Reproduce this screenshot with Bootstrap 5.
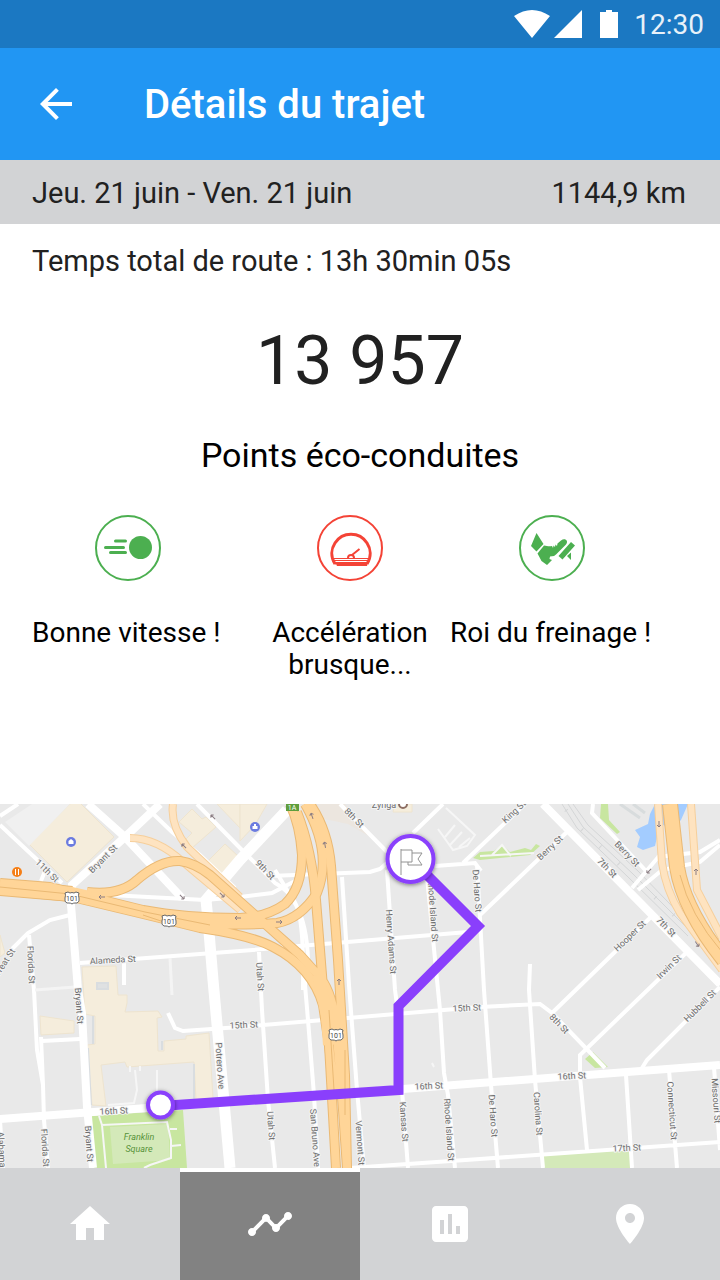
<!DOCTYPE html>
<html lang="fr">
<head>
<meta charset="utf-8">
<meta name="viewport" content="width=device-width, initial-scale=1">
<title>Détails du trajet</title>
<link href="https://cdn.jsdelivr.net/npm/bootstrap@5.3.0/dist/css/bootstrap.min.css" rel="stylesheet">
<style>
body{font-family:Roboto,"Noto Sans",sans-serif;font-size:28px;line-height:32px;color:#000}
.status-bar{background:#1b78c2;height:48px;color:#e8f1f9}
.status-icons{margin-right:14px}
.status-time{padding-top:2px}
.app-bar{background:#2196f3;height:112px;padding:0 32px}
.app-title{font-size:40px;line-height:48px;font-weight:500;padding-top:2px}
.back-btn{width:48px;height:48px;margin-right:64px}
.trip-strip{background:#d2d3d5;color:#212121;font-size:29px;padding:17px 34px 15px 32px}
.duration{color:#212121;font-size:29px;padding:21px 32px 0}
.score{color:#212121;font-size:68px;line-height:80px;margin-top:44px}
.score-label{font-size:34px;line-height:40px;margin-top:34px}
.feats{padding:0 32px;margin-top:40px;min-height:289px}
.feat-side{flex:0 1 192px}
.feat-mid{flex:0 1 200px;margin-left:26px}
.feat-end{flex:0 1 204px}
.feat-label{margin-top:36px}
.map-box{min-height:364px;background:#e9e9e9}
.tab-link{height:112px;background:#d2d3d5;color:#fff;border-top:4px solid #d2d3d5;padding-bottom:4px}
.tab-link.active{background:#828282;border-top-color:#fff}
.minor{stroke:#fff;stroke-width:4}
.thin{stroke:#f6f6f6;stroke-width:2}
.major{stroke:#fff;stroke-width:8}
.hw-edge{stroke:#eab974}
.hw{stroke:#ffd598}
.ramp-edge{stroke:#f6cf9b}
.ramp{stroke:#fee3c0}
.names{font-size:9px;fill:#6e6e6e;stroke:#f4f4f4;stroke-width:2;paint-order:stroke;text-anchor:middle;stroke-linejoin:round}
</style>
</head>
<body class="d-flex flex-column min-vh-100 bg-white">

<div class="status-bar d-flex align-items-center justify-content-end px-3">
  <svg width="106" height="28" viewBox="0 0 106 28" fill="#fff" class="status-icons" aria-hidden="true"><path d="M0 6Q18-6 36 6L18 28ZM40 28 68 0V28ZM86 2H92V0H98V2H104V28H86Z"/></svg>
  <span class="status-time">12:30</span>
</div>

<header class="app-bar d-flex align-items-center text-white">
  <button type="button" class="back-btn btn border-0 p-0 text-white d-flex align-items-center justify-content-center" aria-label="Retour">
    <svg width="48" height="48" viewBox="0 0 24 24" fill="currentColor"><path d="M20 11H7.830L13.420 5.410 12 4 4 12 12 20 13.410 18.590 7.830 13H20Z"/></svg>
  </button>
  <h1 class="app-title mb-0">Détails du trajet</h1>
</header>

<main class="d-flex flex-column flex-grow-1">
  <div class="trip-strip d-flex justify-content-between">
    <span>Jeu. 21 juin - Ven. 21 juin</span><span>1144,9 km</span>
  </div>
  <div class="duration">Temps total de route : 13h 30min 05s</div>
  <div class="score text-center">13 957</div>
  <div class="score-label text-center">Points éco-conduites</div>

  <div class="feats d-flex text-center">
    <div class="feat-side">
      <svg width="66" height="66" viewBox="0 0 66 66" fill="#4caf50" stroke="#4caf50" aria-hidden="true"><circle cx="33" cy="33" r="32" fill="#fff" stroke-width="2"/><circle cx="45.500" cy="32.500" r="11.500" stroke="none"/><path d="M20.500 26H30.500M10.500 32.500H28.500M15.500 37.500H30.500" stroke-width="3" stroke-linecap="round"/></svg>
      <div class="feat-label text-start text-nowrap">Bonne vitesse !</div>
    </div>
    <div class="feat-mid">
      <svg width="66" height="66" viewBox="0 0 66 66" fill="none" stroke="#f44336" aria-hidden="true"><circle cx="33" cy="33" r="32" fill="#fff" stroke-width="2"/><path d="M18 49C13.500 42 14 34 18 28A19 19 0 0 1 50 28C54 34 54.500 42 50 49" stroke-width="3"/><path d="M15 43.500H53M17 45.500H51" stroke-width="1"/><path d="M17 47H51L50 51H20L19 49 18 50Z" fill="#f44336" stroke="none"/><path d="M31 43A3 3 0 0 1 37 43M35 40 42.500 34" stroke-width="2"/></svg>
      <div class="feat-label">Accélération brusque...</div>
    </div>
    <div class="feat-end">
      <svg width="66" height="66" viewBox="0 0 66 66" fill="#4caf50" aria-hidden="true"><circle cx="33" cy="33" r="32" fill="#fff" stroke="#4caf50" stroke-width="2"/><path d="M17.500 18 24.500 29 17.500 36.500 12 31ZM25 30.500C28 31 30 31.500 33 31L34 33 34.500 30.500 36 32 36.500 29.500 38 31 38.500 28.500L42 25.500C46 22.500 50 26 47 29.500L37 39.500 35 41 31 41.500 30.500 44 33 45 28 50 22.500 46 18.500 38.500ZM52 27 56 30.500 43.500 44.500 39.500 41ZM48 41 52 37.500V45Z"/></svg>
      <div class="feat-label text-start text-nowrap">Roi du freinage !</div>
    </div>
  </div>

  <div class="map-box flex-grow-1 position-relative overflow-hidden">
  <svg class="position-absolute w-100 h-100 top-0 start-0" viewBox="0 804 720 364" preserveAspectRatio="xMidYMid slice" fill="none" role="img" aria-label="Carte du trajet">
    <defs>
      <filter id="shade" x="-30%" y="-30%" width="160%" height="160%"><feDropShadow dx="0" dy="1" stdDeviation="2" flood-opacity=".5"/></filter>
      <g id="shield"><path d="M-7-5-4-6-2-5Q0-6 2-5L4-6 7-5Q6-3 7 0 8 4 5 5H3Q1 5 0 6-1 5-3 5H-5Q-8 4-7 0-6-3-7-5Z" fill="#fff" stroke="#666"/><text y="3" font-size="7" fill="#444" text-anchor="middle">101</text></g>
      <path id="arrow" d="M-3 0H3M-3 0-1-2M-3 0-1 2" stroke="#8b7d83" stroke-width="1"/>
    </defs>

    <!-- buildings, parks, water -->
    <g fill="#f5eddc" stroke="#eee4cf">
      <path d="M77 800 114 837 67 882 29 844 70 804Z"/>
      <path d="M192 809 202 819 206 817 216 827 192 848 186 839 192 833 179 822ZM217 804 240 828V804ZM225 844 238 856 221 876 207 862Z"/>
      <path d="M240 804H267L255 825 240 841ZM395 804H412V812H393Z"/>
      <path d="M82 967 116 966 118 995 127 995V1003L125 1012 158 1011 162 1017 157 1018 158 1051H164V1041L186 1039V1036L209 1033 213 1098 196 1100 194 1062 127 1067 125 1062 101 1065 106 1106 92 1105 87 1045 95 1044V1016L85 1014Z"/>
      <path d="M40 1016 74 1021 74 1033 41 1035ZM0 935 5 953 0 957Z"/>
    </g>
    <path d="M97 983H108V989H97ZM93 1016V1044M88 1048 91 1105M162 1050V1041M194 1064V1099" fill="#dfe1e2" stroke="#d9dde0" stroke-width="2"/>
    <path d="M32 804 5 822 29 846 70 804Z" fill="#f0f0f0"/>
    <path d="M345 804H300L320 818 348 824 372 838Z" fill="#ece6df"/>
    <g fill="#c8e6a0">
      <path d="M89 1116 183 1110 187 1168H94ZM480 852 494 851 502 845 510 852 525 848 531 850 536 844 540 846 530 855 480 860 473 858ZM601 804 608 804 609 820 620 832 617 834 600 818ZM593 1052 608 1067 595 1068 585 1059Z"/>
      <path d="M543 1155 630 1150 632 1168H544Z" fill="#d4e9b9"/>
      <path d="M110 1127 168 1124 170 1160 113 1164Z" fill="#d4e9b9"/>
    </g>
    <path d="M655 804H688L681 820 672 828 660 824 655 846 643 850 637 847 640 837 635 830 648 824 650 814Z" fill="#a3ccff"/>
    <path d="M620 804 640 818M633 804 645 813" stroke="#d8dcdd" stroke-width="3"/>

    <!-- railway -->
    <g stroke="#d4d6d7"><path d="M562 804 577 828 627 876 688 936M568 804 583 827 633 874 693 934M573 804 588 825 638 871 697 932"/><path d="M566 810 580 828 692 932" stroke-width="4" stroke-dasharray="1 24"/></g>

    <!-- secondary streets -->
    <g class="thin"><path d="M99 1116 102 1125 167 1122 171 1140V1158L150 1165 144 1168M102 1125 106 1168M170 1129H177M171 1146 181 1145M108 1105 134 1103 137 1090 135 1070M157 1070V1095M130 1066V1072M140 1066V1071M438 829 453 850 467 846 475 835 446 808M445 837 455 825M450 845 462 832M459 847 470 838M480 856 534 853M492 855 502 845 511 856M432 1063 434 1067"/></g>
    <g class="minor">
      <path d="M0 825 62 883M0 816 18 804M45 871 41 881M143 804 172 832 200 855 235 888M197 804 240 848 275 883Q293 893 298 910 304 930 303 990M275 870 296 905Q307 925 308 960L305 985 308 1020 314 1095 318 1168"/>
      <path d="M110 895 205 900 240 897 272 893 297 880M270 876 370 872 380 869 387 863M435 866 475 863 481 871M340 804 388 853M443 804 413 833M525 804 463 863M568 831 480 915M342 877 349 985 357 1090 364 1168M387 870 395 990 397 1005M402 1090 408 1168M427 877 438 990 440 1010 444 1073 448 1095 455 1168M477 865 484 990 491 1085 498 1168M530 964 529 990 535 1080 543 1168"/>
      <path d="M70 915 50 920 28 933 12 949M29 935 34 990 37 1050 43 1085 44 1120 48 1168M41 1037 43 1085M42 1041 80 1039M80 963 240 951 480 931M259 952 262 1010 268 1100 275 1168M168 1013 175 1028 183 1031 240 1027 480 1007 540 1004 552 1013 605 1068M124 963V985M0 1120 3 1168"/>
      <path d="M652 916 552 1013M687 952 580 1055V1077L587 1150M720 987 647 1060 642 1068M626 1075 632 1168M669 1070 677 1168M714 1067 720 1150M350 1168 480 1159 720 1142M715 980 720 985"/>
      <path d="M593 804 592 813 647 872M660 855 632 888M657 857 700 852 720 840M638 890 662 870 700 862 720 845"/>
      <path d="M35 990 75 987M170 958 172 995" stroke="#f4f4f4" stroke-width="3"/>
    </g>
    <!-- main streets -->
    <g class="major">
      <path d="M160 804 125 837 72 885 71 905 78 990 82 1013 87 1107 93 1168M88 804 125 837 182 898M543 804 720 984"/>
      <path d="M0 1119 147 1108 403 1089 480 1083 720 1065"/>
      <path d="M287 810 240 860 206 900 208 920 213 980 218 1035 230 1168" stroke-width="11"/>
    </g>

    <!-- ramps -->
    <g class="ramp-edge" stroke-width="8"><path id="r1" d="M130 838Q157 838 183 862L240 910M173 804Q170 825 187 847L240 897M658 804 662 863Q666 890 680 913L722 970M691 804 697 890 722 938"/></g>
    <use href="#r1" class="ramp" stroke-width="6"/>

    <!-- freeways -->
    <g stroke-linejoin="round">
      <path class="hw-edge" stroke-width="16" d="M0 887 72 894"/>
      <g class="hw-edge" stroke-width="10">
        <path id="h1" d="M0 883 50 887 143 910Q185 918 240 918 267 917 285 904 302 888 302 855 300 825 290 804M0 891 72 897 143 914 200 928Q250 935 273 947 312 967 323 1005L329 1045 336 1168M165 917Q205 928 277 923 300 919 317 893 333 853 305 804"/>
        <path id="h2" d="M87 892Q120 896 137 880 160 860 180 861 195 863 210 875L300 955 318 975Q332 990 336 1025L343 1110 347 1168M297 812Q312 850 316 900L324 1000 334 1090M310 804Q328 830 331 866L338 960 345 1075 347 1168"/>
      </g>
      <use href="#h1" class="hw" stroke-width="8"/><use href="#h2" class="hw" stroke-width="8"/>
      <path class="hw" stroke-width="14" d="M0 887 72 894 90 898"/>
      <path class="hw" stroke-width="12" d="M318 975 327 1015 329 1045"/>
      <path class="hw-edge" stroke-width="16" d="M670 804 677 867Q684 910 724 960"/>
      <path class="hw" stroke-width="14" d="M670 804 677 867Q684 910 724 960"/>
      <path class="hw-edge" d="M0 887 70 894 145 912 210 925M680 875Q690 915 722 952M329 1010 334 1090M345 1050V1115M143 915 170 924" stroke-width="1"/>
    </g>
    <g><use href="#arrow" x="102" y="897"/><use href="#arrow" x="238" y="918"/><use href="#arrow" transform="translate(279 922) rotate(180)"/><use href="#arrow" transform="translate(312 816) rotate(70)"/><use href="#arrow" transform="translate(325 845) rotate(80)"/><use href="#arrow" transform="translate(339 982) rotate(90)"/><use href="#arrow" transform="translate(659 824) rotate(-90)"/><use href="#arrow" transform="translate(696 872) rotate(90)"/><use href="#arrow" transform="translate(697 944) rotate(-125)"/><use href="#arrow" transform="translate(182 897) rotate(-135)"/><use href="#arrow" transform="translate(222 895) rotate(-135)"/><use href="#arrow" transform="translate(184 846) rotate(45)"/><use href="#arrow" transform="translate(213 817) rotate(45)"/><use href="#arrow" transform="translate(649 871) rotate(-45)"/></g>

    <use href="#shield" x="72" y="898"/><use href="#shield" x="169" y="921"/><use href="#shield" x="336" y="1035"/>
    <path d="M286 804H299V811H286Z" fill="#5f9e3c"/><text x="292" y="810" font-size="7" fill="#fff" text-anchor="middle">1A</text>

    <!-- street names -->
    <g class="names">
      <text transform="translate(45 873) rotate(44)">11th St</text>
      <text transform="translate(105 861) rotate(-45)">Bryant St</text>
      <text transform="translate(263 872) rotate(46)">9th St</text>
      <text transform="translate(352 820) rotate(45)">8th St</text>
      <text x="384" y="808">Zynga</text>
      <text transform="translate(113 963) rotate(-3)">Alameda St</text>
      <text transform="translate(28 965) rotate(87)">Florida St</text>
      <text transform="translate(7 964) rotate(-57)">Treat St</text>
      <text transform="translate(76 1006) rotate(86)">Bryant St</text>
      <text transform="translate(86 1144) rotate(86)">Bryant St</text>
      <text transform="translate(42 1148) rotate(86)">Florida St</text>
      <text transform="translate(-1 1155) rotate(86)">Alabama St</text>
      <text transform="translate(114 1114) rotate(-3)">16th St</text>
      <text transform="translate(257 977) rotate(86)">Utah St</text>
      <text transform="translate(244 1028) rotate(-3)">15th St</text>
      <text transform="translate(217 1066) rotate(86)">Potrero Ave</text>
      <text transform="translate(268 1126) rotate(86)">Utah St</text>
      <text transform="translate(312 1138) rotate(86)">San Bruno Ave</text>
      <text transform="translate(357 1143) rotate(86)">Vermont St</text>
      <text transform="translate(401 1122) rotate(86)">Kansas St</text>
      <text transform="translate(446 1130) rotate(86)">Rhode Island St</text>
      <text transform="translate(429 1089) rotate(-3)">16th St</text>
      <text transform="translate(467 1011) rotate(-3)">15th St</text>
      <text transform="translate(388 942) rotate(86)">Henry Adams St</text>
      <text transform="translate(430 911) rotate(86)">Rhode Island St</text>
      <text transform="translate(474 891) rotate(86)">De Haro St</text>
      <text transform="translate(516 814) rotate(-43)">King St</text>
      <text transform="translate(552 850) rotate(-43)">Berry St</text>
      <text transform="translate(625 856) rotate(46)">Berry St</text>
      <text transform="translate(605 870) rotate(46)">7th St</text>
      <text transform="translate(664 929) rotate(46)">7th St</text>
      <text transform="translate(632 938) rotate(-44)">Hooper St</text>
      <text transform="translate(671 969) rotate(-44)">Irwin St</text>
      <text transform="translate(702 1008) rotate(-45)">Hubbell St</text>
      <text transform="translate(557 1026) rotate(46)">8th St</text>
      <text transform="translate(572 1079) rotate(-3)">16th St</text>
      <text transform="translate(490 1116) rotate(86)">De Haro St</text>
      <text transform="translate(535 1114) rotate(86)">Carolina St</text>
      <text transform="translate(669 1111) rotate(86)">Connecticut St</text>
      <text transform="translate(713 1101) rotate(86)">Missouri St</text>
      <text transform="translate(627 1151) rotate(-3)">17th St</text>
      <g fill="#57923a" font-style="italic" stroke="none"><text x="139" y="1140">Franklin</text><text x="139" y="1152">Square</text></g>
    </g>

    <!-- points of interest -->
    <circle cx="17" cy="872" r="5" fill="#f57f17"/><path d="M15.500 869V875M18.500 869V875" stroke="#fff"/>
    <circle cx="71" cy="842" r="5" fill="#6b7be0"/><path d="M68.500 841 71 839 73.500 841V844H68.500Z" fill="#fff"/>
    <circle cx="255" cy="827" r="5" fill="#6b7be0"/><path d="M252.500 826H257.500V829H252.500ZM254 826V824H256V826" fill="#fff"/>
    <circle cx="403" cy="804" r="4" stroke="#8d6e63" stroke-width="2" fill="#fff"/>

    <!-- route -->
    <path d="M161 1106 398.500 1090V1006L478 926 411 859" stroke="#8a3ffc" stroke-width="10"/>
    <g filter="url(#shade)"><circle cx="160.500" cy="1105" r="12.500" fill="#fff" stroke="#8a3ffc" stroke-width="4"/><circle cx="410.500" cy="859" r="23" fill="#fff" stroke="#8a3ffc" stroke-width="4"/></g>
    <path d="M401 849V875M401 850H412V862H401M412 853H422L418 859 422 865H408V862" stroke="#929292" stroke-width="1"/>
  </svg>
  </div>
</main>

<nav class="row g-0" aria-label="Navigation principale">
  <a href="#accueil" class="tab-link col d-flex align-items-center justify-content-center" aria-label="Accueil"><svg width="48" height="48" viewBox="0 0 24 24" fill="currentColor"><path d="M10 20V14H14V20H19V12H22L12 3 2 12H5V20Z"/></svg></a>
  <a href="#trajets" class="tab-link active col d-flex align-items-center justify-content-center" aria-label="Trajets" aria-current="page"><svg width="48" height="48" viewBox="0 0 24 24" fill="currentColor"><path d="M23 8c0 1.100-.9 2-2 2-.18 0-.35-.02-.51-.07l-3.560 3.550c.05.16.07.34.07.52 0 1.100-.9 2-2 2s-2-.9-2-2c0-.18.02-.36.07-.52l-2.550-2.550c-.16.05-.34.07-.52.07s-.36-.02-.52-.07l-4.550 4.560c.05.16.07.33.07.51 0 1.100-.9 2-2 2s-2-.9-2-2 .9-2 2-2c.18 0 .35.02.51.07l4.560-4.550C8.020 9.360 8 9.180 8 9c0-1.100.9-2 2-2s2 .9 2 2c0 .18-.02.36-.07.52l2.550 2.550c.16-.05.34-.07.52-.07s.36.02.52.07l3.550-3.560C19.020 8.350 19 8.180 19 8c0-1.100.9-2 2-2s2 .9 2 2z"/></svg></a>
  <a href="#statistiques" class="tab-link col d-flex align-items-center justify-content-center" aria-label="Statistiques"><svg width="48" height="48" viewBox="0 0 24 24" fill="currentColor"><path d="M19 3H5c-1.100 0-2 .9-2 2v14c0 1.100.9 2 2 2h14c1.100 0 2-.9 2-2V5c0-1.100-.9-2-2-2zM9 17H7v-7h2v7zm4 0h-2V7h2v10zm4 0h-2v-4h2v4z"/></svg></a>
  <a href="#carte" class="tab-link col d-flex align-items-center justify-content-center" aria-label="Carte"><svg width="48" height="48" viewBox="0 0 24 24" fill="currentColor"><path d="M12 2C8.130 2 5 5.130 5 9c0 5.250 7 13 7 13s7-7.750 7-13c0-3.870-3.130-7-7-7zm0 9.500c-1.380 0-2.500-1.120-2.500-2.500s1.120-2.500 2.500-2.500 2.500 1.120 2.500 2.500-1.120 2.500-2.500 2.500z"/></svg></a>
</nav>
<script src="https://cdn.jsdelivr.net/npm/bootstrap@5.3.0/dist/js/bootstrap.bundle.min.js"></script>
</body>
</html>
